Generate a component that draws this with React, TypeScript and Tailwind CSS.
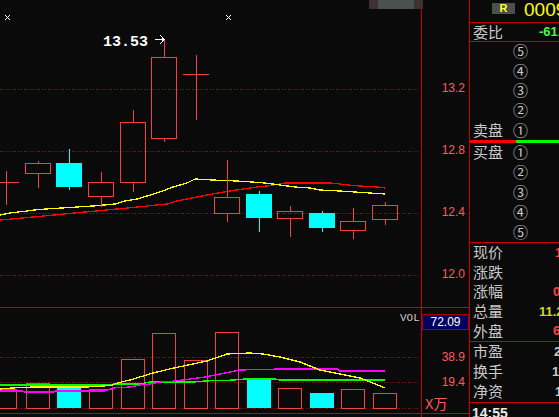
import React from 'react';

type Candle = { x: number; top: number; bot: number; hi: number; lo: number; kind: 'r' | 'c' | 'x' };
type Bar = { l: number; r: number; top: number; kind: 'r' | 'c' };

const candles: Candle[] = [
  { x: -7, top: 182, bot: 182, hi: 171, lo: 205, kind: 'x' },
  { x: 25, top: 163, bot: 173, hi: 161, lo: 188, kind: 'r' },
  { x: 56, top: 163, bot: 187, hi: 149, lo: 190, kind: 'c' },
  { x: 88, top: 182, bot: 196, hi: 172, lo: 207, kind: 'r' },
  { x: 120, top: 122, bot: 182, hi: 110, lo: 192, kind: 'r' },
  { x: 151, top: 57, bot: 138, hi: 39, lo: 142, kind: 'r' },
  { x: 183, top: 74, bot: 74, hi: 55, lo: 120, kind: 'x' },
  { x: 214, top: 197, bot: 213, hi: 160, lo: 222, kind: 'r' },
  { x: 246, top: 194, bot: 218, hi: 191, lo: 232, kind: 'c' },
  { x: 277, top: 211, bot: 218, hi: 206, lo: 237, kind: 'r' },
  { x: 309, top: 213, bot: 228, hi: 211, lo: 232, kind: 'c' },
  { x: 340, top: 221, bot: 230, hi: 208, lo: 239, kind: 'r' },
  { x: 372, top: 205, bot: 219, hi: 202, lo: 225, kind: 'r' },
];

// volume bars, y relative to the volume pane (bottom = 100)
const bars: Bar[] = [
  { l: -10, r: 16, top: 81, kind: 'r' },
  { l: 26, r: 49, top: 75, kind: 'r' },
  { l: 57, r: 80, top: 78, kind: 'c' },
  { l: 89, r: 112, top: 81, kind: 'r' },
  { l: 121, r: 144, top: 51, kind: 'r' },
  { l: 152, r: 175, top: 25, kind: 'r' },
  { l: 184, r: 207, top: 52, kind: 'r' },
  { l: 215, r: 238, top: 24, kind: 'r' },
  { l: 247, r: 270, top: 71, kind: 'c' },
  { l: 278, r: 301, top: 80, kind: 'r' },
  { l: 310, r: 333, top: 85, kind: 'c' },
  { l: 341, r: 364, top: 81, kind: 'r' },
  { l: 373, r: 396, top: 85, kind: 'r' },
];

const ma5 =
  '0,215 10,213 18,212 27,211 34,210 46,209 62,208 77,207 93,206 104,205 115,204 125,201 137,199 147,196 160,192 173,187 187,183 195,179 212,180 237,181 252,182 265,183 280,185 295,187 310,188 320,190 340,191 355,192 370,193 385,194';
const ma10 =
  '0,220 12,219 22,218 33,217 44,216 54,215 65,214 75,213 85,212 97,211 107,210 117,209 128,208 138,207 147,206 157,205 167,204 177,201 187,199 197,197 207,195 218,193 230,191 243,189 257,187 267,186 280,184 285,183 330,183 340,184 348,185 360,186 378,187 385,188';

const rel = (pts: [number, number][]) => pts.map(([x, y]) => `${x},${y - 308}`).join(' ');
const volYellow = rel([
  [0, 389], [12, 388], [33, 387], [86, 387], [104, 386], [113, 385], [117, 383], [130, 380], [153, 373], [174, 368],
  [207, 361], [227, 354], [250, 353], [263, 354], [280, 357], [300, 362], [320, 370], [340, 374], [360, 378], [385, 388],
]);
const volMagenta = rel([
  [0, 391], [23, 391], [24, 392], [54, 392], [55, 391], [105, 391], [113, 388], [130, 387], [140, 385], [150, 384],
  [160, 382], [175, 381], [190, 379], [205, 377], [215, 375], [225, 373], [240, 370], [280, 369], [338, 369], [339, 371], [385, 371],
]);
const volGreen = rel([
  [0, 385], [105, 385], [115, 384], [140, 384], [150, 382], [195, 382], [205, 381], [235, 380], [245, 379], [275, 379], [280, 380], [385, 380],
]);

const C_RED = '#f44040';
const C_CYAN = '#00ffff';
const DOT = '#b40000';

function MainChart() {
  return (
    <svg width={421} height={307} className="block" shapeRendering="crispEdges">
      {[89, 151, 213, 275].map((y) => (
        <line key={y} x1={0} x2={418} y1={y + 0.5} y2={y + 0.5} stroke={DOT} strokeDasharray="1 2" />
      ))}
      {/* little x marks */}
      <path d="M5 15 L10 20 M10 15 L5 20" stroke="#fff" strokeWidth={1} />
      <path d="M226 15 L231 20 M231 15 L226 20" stroke="#fff" strokeWidth={1} />

      <polyline points={ma10} fill="none" stroke="#ff0000" strokeWidth={1.3} />
      <polyline points={ma5} fill="none" stroke="#ffff00" strokeWidth={1.3} />

      {candles.map((c, i) => {
        const cx = c.x + 13 + 0.5;
        if (c.kind === 'x') {
          return (
            <g key={i} stroke={C_RED}>
              <line x1={cx} x2={cx} y1={c.hi} y2={c.lo} />
              <line x1={c.x} x2={c.x + 26} y1={c.top + 0.5} y2={c.top + 0.5} />
            </g>
          );
        }
        if (c.kind === 'c') {
          return (
            <g key={i}>
              <line x1={cx} x2={cx} y1={c.hi} y2={c.lo} stroke={C_CYAN} />
              <rect x={c.x} y={c.top} width={26} height={c.bot - c.top} fill={C_CYAN} />
            </g>
          );
        }
        return (
          <g key={i} stroke={C_RED} fill="none">
            <line x1={cx} x2={cx} y1={c.hi} y2={c.top} />
            <line x1={cx} x2={cx} y1={c.bot + 1} y2={c.lo} />
            <rect x={c.x + 0.5} y={c.top + 0.5} width={25} height={c.bot - c.top} />
          </g>
        );
      })}

      <text
        x={103}
        y={46}
        fill="#ffffff"
        fontSize={15}
        fontWeight="bold"
        fontFamily="'Liberation Mono', monospace"
      >
        13.53
      </text>
      <path d="M155 39.5 H164 M160 35 L164 39.5 L160 44" stroke="#fff" fill="none" />
    </svg>
  );
}

function VolumeChart() {
  return (
    <svg width={421} height={105} className="block" shapeRendering="crispEdges">
      {[49, 74, 100].map((y) => (
        <line key={y} x1={0} x2={418} y1={y + 0.5} y2={y + 0.5} stroke={DOT} strokeDasharray="1 2" />
      ))}
      {bars.map((b, i) =>
        b.kind === 'c' ? (
          <rect key={i} x={b.l} y={b.top} width={b.r - b.l + 1} height={100 - b.top} fill={C_CYAN} />
        ) : (
          <rect
            key={i}
            x={b.l + 0.5}
            y={b.top + 0.5}
            width={b.r - b.l}
            height={100 - b.top}
            fill="none"
            stroke={C_RED}
          />
        ),
      )}
      <polyline points={volGreen} fill="none" stroke="#00ff00" strokeWidth={1.3} />
      <polyline points={volMagenta} fill="none" stroke="#ff00ff" strokeWidth={1.3} />
      <polyline points={volYellow} fill="none" stroke="#ffff00" strokeWidth={1.3} />
      <text x={400} y={13} fill="#c8c8c8" fontSize={11} fontFamily="'Liberation Mono', monospace">
        VOL
      </text>
    </svg>
  );
}

const sellRows = ['⑤', '④', '③', '②', '①'];
const buyRows = ['①', '②', '③', '④', '⑤'];

const quoteRows = [
  { label: '现价', value: '12.45', cls: 'ml-[42px] text-[#ff4040]' },
  { label: '涨跌', value: '', cls: 'ml-[42px] text-[#ff4040]' },
  { label: '涨幅', value: '0.65%', cls: 'ml-[40px] text-[#ff4040]' },
  { label: '总量', value: '11.2万', cls: 'ml-[26px] text-[#d4d420]' },
  { label: '外盘', value: '6.13万', cls: 'ml-[40px] text-[#ff4040]' },
];

const extraRows = [
  { label: '市盈', value: '25.3', cls: 'ml-[41px]' },
  { label: '换手', value: '1.25%', cls: 'ml-[39px]' },
  { label: '净资', value: '1.98', cls: 'ml-[42px]' },
];

export default function App() {
  return (
    <div className="relative flex h-[417px] w-[559px] overflow-hidden bg-[#0a0a0a] font-['Liberation_Sans','Noto_Sans_CJK_SC',sans-serif] text-[#c8c8c8]">
      {/* chart column */}
      <div className="flex w-[422px] shrink-0 flex-col border-r border-[#c40000]">
        <MainChart />
        <div className="border-t border-[#c40000]">
          <VolumeChart />
        </div>
        <div className="flex-1 border-t border-[#c40000]" />
      </div>

      {/* price axis column */}
      <div className="flex w-[48px] shrink-0 flex-col border-r border-[#c40000] text-[12px] leading-[14px] text-[#ff5a5a]">
        <div className="flex h-[307px] flex-col items-end pr-[4px] pt-[81px]">
          <span>13.2</span>
          <span className="mt-[48px]">12.8</span>
          <span className="mt-[48px]">12.4</span>
          <span className="mt-[48px]">12.0</span>
        </div>
        <div className="flex h-[106px] flex-col border-t border-[#c40000]">
          <div className="mt-[6px] flex h-[16px] items-center justify-center border border-[#a00000] bg-[#000060] text-[12px] text-white">
            72.09
          </div>
          <span className="mt-[20px] self-end pr-[4px]">38.9</span>
          <span className="mt-[11px] self-end pr-[4px]">19.4</span>
          <span className="mt-[9px] pl-[3px] text-[14px] leading-[14px] font-['Liberation_Mono','Noto_Sans_CJK_SC',monospace]">
            X万
          </span>
        </div>
        <div className="flex-1 border-t border-[#c40000]" />
      </div>

      {/* quote panel */}
      <div className="flex min-w-0 flex-1 flex-col overflow-hidden text-[15px]">
        <div className="flex h-[23px] shrink-0 items-start border-b border-[#c40000] pt-[3px]">
          <div className="ml-[22px] flex h-[11px] w-[23px] shrink-0 items-center justify-center bg-[#4b504b] text-[11px] font-bold leading-none text-[#ffff40]">
            R
          </div>
          <span className="ml-[9px] -mt-[3px] shrink-0 whitespace-nowrap text-[19px] leading-[19px] text-[#ffff00]">
            000958
          </span>
        </div>
        <div className="flex h-[19px] shrink-0 items-center border-b border-[#c40000] pl-[3px]">
          <span className="w-[40px] shrink-0 leading-none">委比</span>
          <span className="ml-[26px] shrink-0 whitespace-nowrap text-[13px] font-bold text-[#40ff40]">-61.54%</span>
        </div>
        {sellRows.map((n, i) => (
          <div key={'s' + i} className="flex h-[19.6px] shrink-0 items-center pl-[3px]">
            <span className="w-[40px] shrink-0 leading-none">{i === 4 ? '卖盘' : ''}</span>
            <span className="leading-none">{n}</span>
          </div>
        ))}
        <div className="flex h-[3px] shrink-0">
          <div className="w-[46px] bg-[#ff0000]" />
          <div className="flex-1 bg-[#00ff00]" />
        </div>
        {buyRows.map((n, i) => (
          <div key={'b' + i} className="flex h-[19.8px] shrink-0 items-center pl-[3px]">
            <span className="w-[40px] shrink-0 leading-none">{i === 0 ? '买盘' : ''}</span>
            <span className="leading-none">{n}</span>
          </div>
        ))}
        <div className="shrink-0 border-t border-[#c40000]" />
        {quoteRows.map((r) => (
          <div key={r.label} className="flex h-[19.6px] shrink-0 items-center pl-[3px]">
            <span className="w-[40px] shrink-0 leading-none">{r.label}</span>
            <span className={`shrink-0 whitespace-nowrap text-[13px] font-bold ${r.cls}`}>{r.value}</span>
          </div>
        ))}
        <div className="shrink-0 border-t border-[#c40000]" />
        {extraRows.map((r) => (
          <div key={r.label} className="flex h-[20px] shrink-0 items-center pl-[3px]">
            <span className="w-[40px] shrink-0 leading-none">{r.label}</span>
            <span className={`shrink-0 whitespace-nowrap text-[13px] font-bold text-[#c8c8c8] ${r.cls}`}>{r.value}</span>
          </div>
        ))}
        <div className="shrink-0 border-t border-[#c40000]" />
        <div className="pl-[2px] pt-[3px] text-[14px] font-bold leading-[14px] text-[#e8e8e8]">14:55</div>
      </div>

      {/* scroll tab at top */}
      <div className="absolute left-[369px] top-0 flex h-[9px] w-[54px]">
        <div className="w-[9px] bg-[#3c3232]" />
        <div className="flex-1 bg-[#4b514d]" />
        <div className="w-[9px] bg-[#3c3232]" />
      </div>
    </div>
  );
}
